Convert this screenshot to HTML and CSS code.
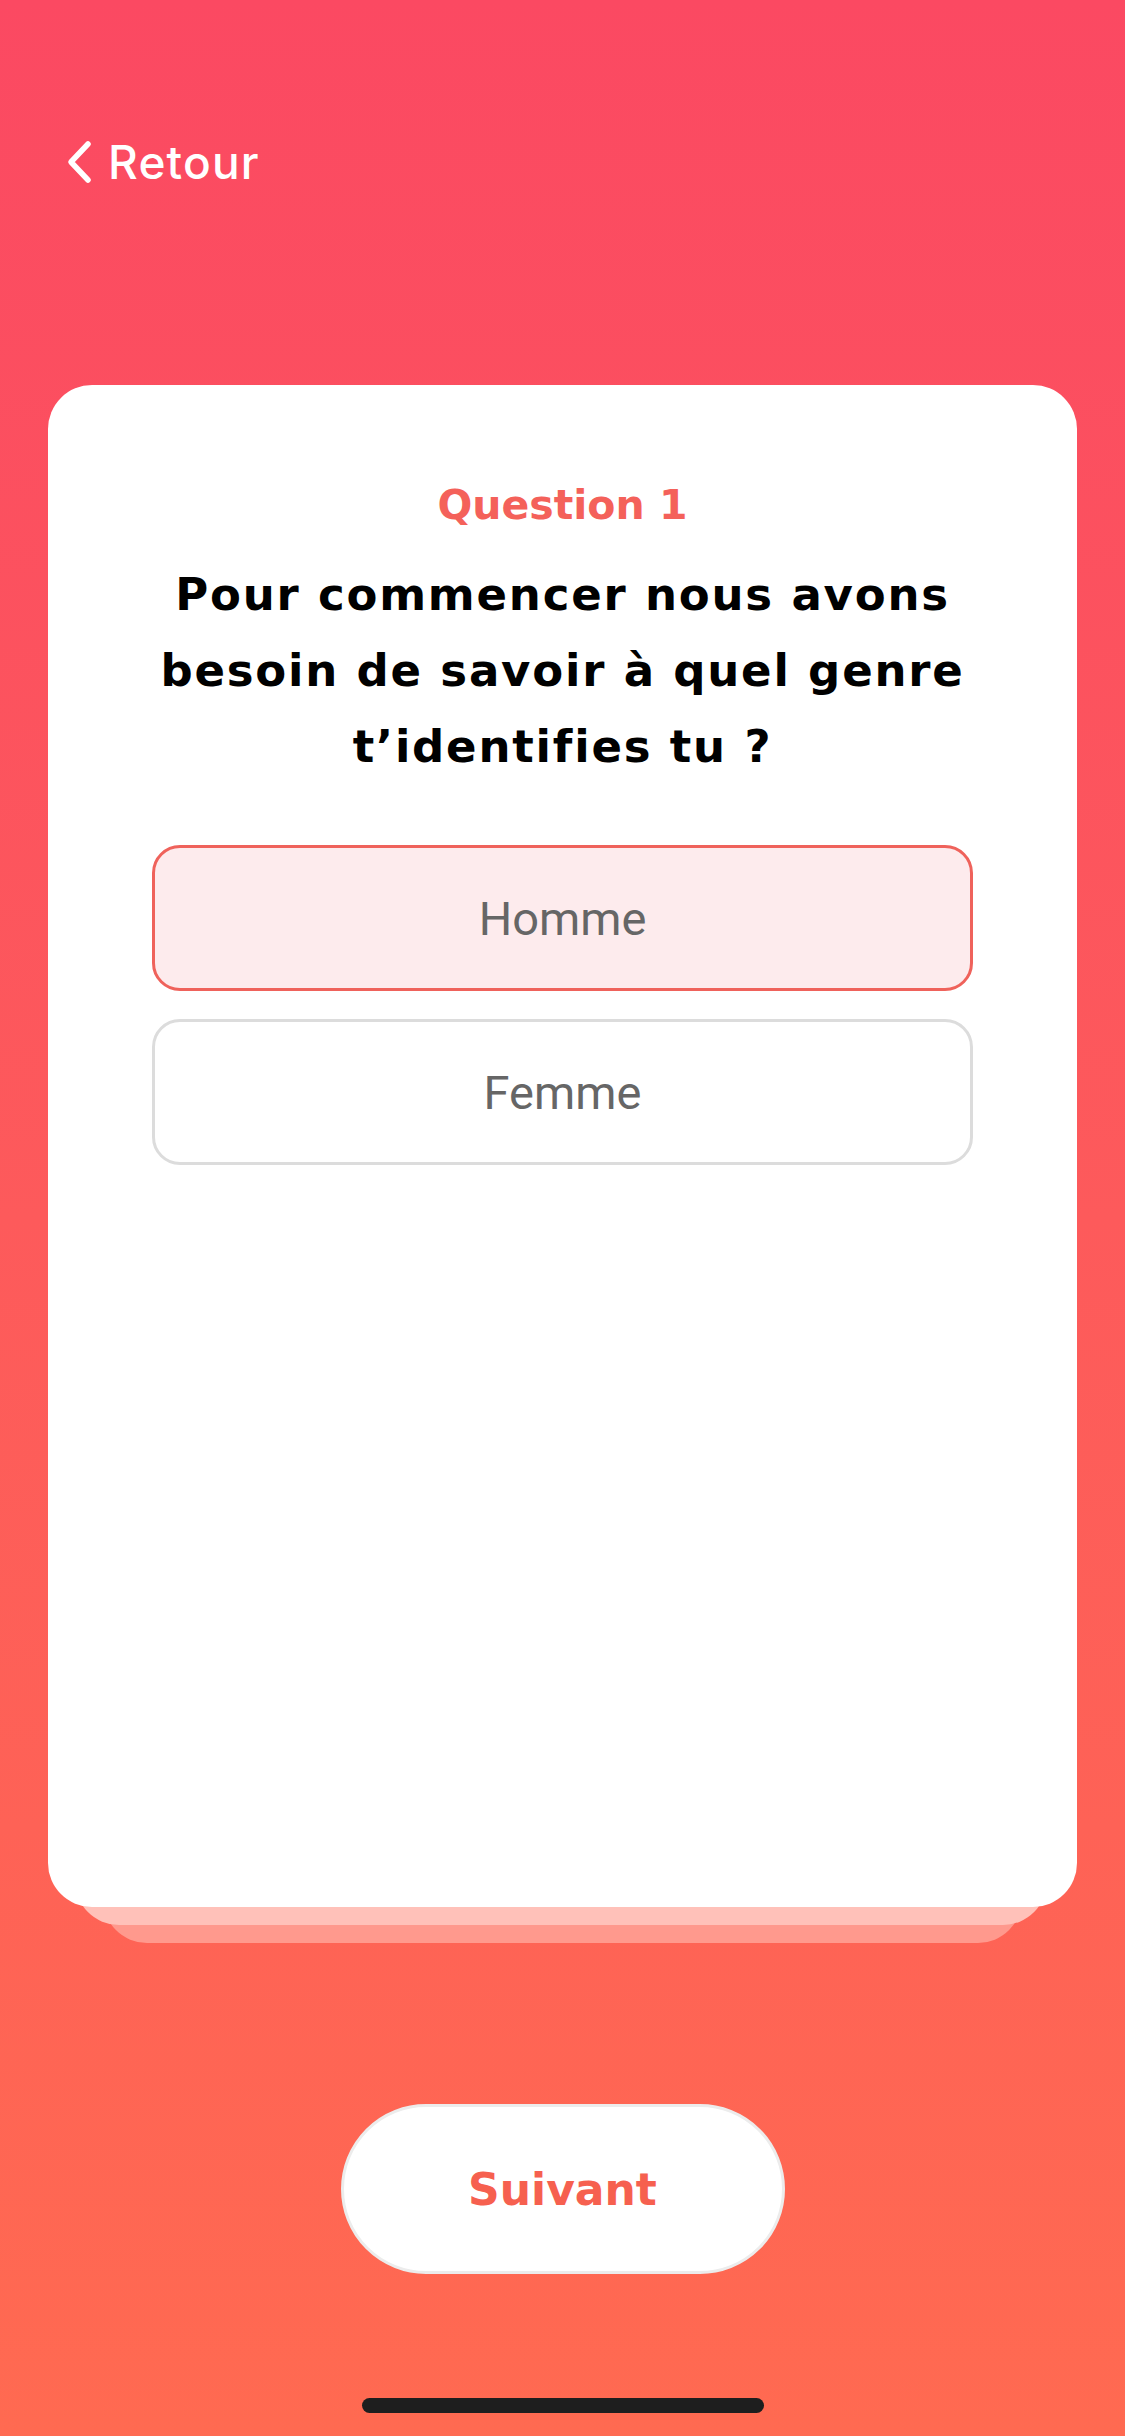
FILE: index.html
```html
<!DOCTYPE html>
<html>
    <head>
        <title>Question 1</title>
        <link rel="stylesheet" href="styles.css">
    </head>
    <body>
        <div class="screen">

            <a class="back" href="#">
                <svg class="chevron" width="26" height="44" viewBox="0 0 26 44">
                    <path d="M22 4 L5 22 L22 40" fill="none" stroke="#fff" stroke-width="5.5" stroke-linecap="round" stroke-linejoin="round"/>
                </svg>
                <span>Retour</span>
            </a>

            <div class="stack">
                <div class="card">
                    <div class="step">Question 1</div>
                    <h1 class="question">Pour commencer nous avons besoin de savoir à quel genre t’identifies tu ?</h1>

                    <div class="options">
                        <button class="option selected">Homme</button>
                        <button class="option">Femme</button>
                    </div>
                </div>
            </div>

            <div class="footer">
                <button class="next">Suivant</button>
            </div>

            <div class="home-bar"></div>
        </div>
    </body>
</html>
```

FILE: styles.css
```css
body {
    margin: 0;
    font-family: Inter, "Noto Sans", sans-serif;
}

button {
    cursor: pointer;
}

.screen {
    width: 1125px;
    height: 2436px;
    display: flex;
    flex-direction: column;
    background: linear-gradient(180deg, #fb4962 0%, #fd5a5b 50%, #ff6a51 100%);
}

/* header */

.back {
    display: flex;
    align-items: center;
    gap: 16px;
    margin: 140px 0 0 66px;
    height: 44px;
    color: #fff;
    text-decoration: none;
    font-size: 46px;
    font-weight: 500;
    letter-spacing: 1.2px;
}

/* card + the two pages behind it */

.stack {
    position: relative;
    margin: 201px 48px 0 48px;
}

.stack::before,
.stack::after {
    content: "";
    position: absolute;
    height: 80px;
    border-radius: 0 0 44px 44px;
}

.stack::before {
    z-index: 1;
    left: 27px;
    right: 30px;
    bottom: -18px;
    background-color: #ffc1b9;
}

.stack::after {
    z-index: 0;
    left: 55px;
    right: 55px;
    bottom: -36px;
    background-color: #ff998d;
}

.card {
    position: relative;
    z-index: 2;
    height: 1522px;
    box-sizing: border-box;
    padding: 94px 90px 0 90px;
    background-color: #fff;
    border-radius: 44px;
    text-align: center;
}

.step {
    color: #f4615a;
    font-family: "DejaVu Sans", sans-serif;
    font-size: 41px;
    font-weight: 700;
    line-height: 52px;
}

.question {
    margin: 26px 0 0 0;
    color: #000;
    font-family: "DejaVu Sans", sans-serif;
    font-size: 45px;
    font-weight: 700;
    line-height: 76px;
    letter-spacing: 1.8px;
}

.options {
    display: flex;
    flex-direction: column;
    gap: 28px;
    margin: 60px 14px 0 14px;
}

.option {
    height: 146px;
    border: 3px solid #dcdcdc;
    border-radius: 28px;
    background-color: #fff;
    color: #666;
    font-family: Roboto, sans-serif;
    font-size: 47px;
    font-weight: 400;
}

.option.selected {
    border-color: #ef625b;
    background-color: #fdebed;
}

/* bottom */

.footer {
    display: flex;
    justify-content: center;
    margin-top: 197px;
}

.next {
    width: 444px;
    height: 170px;
    border: 3px solid #ececec;
    border-radius: 85px;
    background-color: #fff;
    color: #f6604f;
    font-family: "DejaVu Sans", sans-serif;
    font-size: 44px;
    font-weight: 700;
}

.home-bar {
    width: 402px;
    height: 15px;
    margin: 124px auto 0 auto;
    border-radius: 8px;
    background-color: #1e1e1e;
}
```
